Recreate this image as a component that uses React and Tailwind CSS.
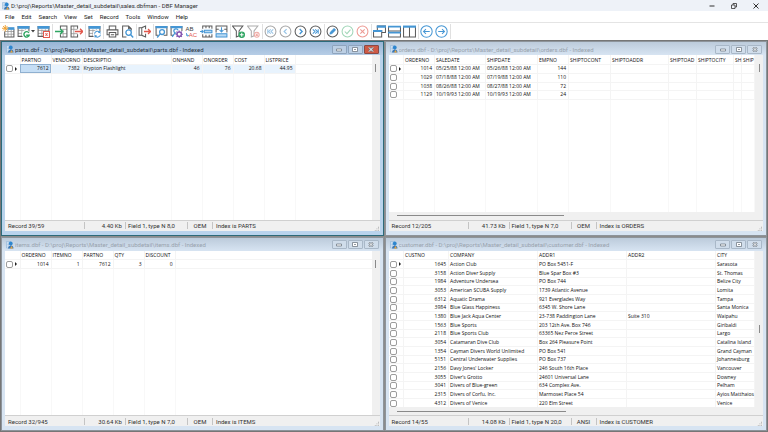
import { clsx } from 'clsx';

const partsColumns = [
  { name: 'PARTNO', width: 31, number: true },
  { name: 'VENDORNO', width: 31, number: true },
  { name: 'DESCRIPTIO', width: 89 },
  { name: 'ONHAND', width: 31, number: true },
  { name: 'ONORDER', width: 31, number: true },
  { name: 'COST', width: 31, number: true },
  { name: 'LISTPRICE', width: 31, number: true },
];

const partsRows = [['7612', '7382', 'Krypton Flashlight', '46', '76', '20.68', '44.95']];

const ordersColumns = [
  { name: 'ORDERNO', width: 31, number: true },
  { name: 'SALEDATE', width: 51 },
  { name: 'SHIPDATE', width: 52 },
  { name: 'EMPNO', width: 31, number: true },
  { name: 'SHIPTOCONT', width: 42 },
  { name: 'SHIPTOADDR', width: 58 },
  { name: 'SHIPTOAD', width: 28 },
  { name: 'SHIPTOCITY', width: 37 },
  { name: 'SH', width: 8 },
  { name: 'SHIP' },
];

const ordersRows = [
  ['1014', '05/25/88 12:00 AM', '05/26/88 12:00 AM', '144'],
  ['1029', '07/18/88 12:00 AM', '07/19/88 12:00 AM', '110'],
  ['1038', '08/26/88 12:00 AM', '08/27/88 12:00 AM', '72'],
  ['1129', '10/19/93 12:00 AM', '10/19/93 12:00 AM', '24'],
];

const itemsColumns = [
  { name: 'ORDERNO', width: 31, number: true },
  { name: 'ITEMNO', width: 31, number: true },
  { name: 'PARTNO', width: 31, number: true },
  { name: 'QTY', width: 31, number: true },
  { name: 'DISCOUNT', width: 31, number: true },
];

const itemsRows = [['1014', '1', '7612', '3', '0']];

const customerColumns = [
  { name: 'CUSTNO', width: 45, number: true },
  { name: 'COMPANY', width: 89 },
  { name: 'ADDR1', width: 89 },
  { name: 'ADDR2', width: 89 },
  { name: 'CITY' },
];

const customerRows = [
  ['1645', 'Action Club', 'PO Box 5451-F', '', 'Sarasota'],
  ['3158', 'Action Diver Supply', 'Blue Spar Box #3', '', 'St. Thomas'],
  ['1984', 'Adventure Undersea', 'PO Box 744', '', 'Belize City'],
  ['3053', 'American SCUBA Supply', '1739 Atlantic Avenue', '', 'Lomita'],
  ['6312', 'Aquatic Drama', '921 Everglades Way', '', 'Tampa'],
  ['3984', 'Blue Glass Happiness', '6345 W. Shore Lane', '', 'Santa Monica'],
  ['1380', 'Blue Jack Aqua Center', '23-738 Paddington Lane', 'Suite 310', 'Waipahu'],
  ['1563', 'Blue Sports', '203 12th Ave. Box 746', '', 'Giribaldi'],
  ['2118', 'Blue Sports Club', '63365 Nez Perce Street', '', 'Largo'],
  ['3054', 'Catamaran Dive Club', 'Box 264 Pleasure Point', '', 'Catalina Island'],
  ['1354', 'Cayman Divers World Unlimited', 'PO Box 541', '', 'Grand Cayman'],
  ['5151', 'Central Underwater Supplies', 'PO Box 737', '', 'Johannesburg'],
  ['2156', "Davy Jones' Locker", '246 South 16th Place', '', 'Vancouver'],
  ['3055', "Diver's Grotto", '24601 Universal Lane', '', 'Downey'],
  ['3041', 'Divers of Blue-green', '634 Complex Ave.', '', 'Pelham'],
  ['2315', 'Divers of Corfu, Inc.', 'Marmoset Place 54', '', 'Ayios Matthaios'],
  ['4312', 'Divers of Venice', '220 Elm Street', '', 'Venice'],
];

const BLUE = '#4596d4';
const DARK = '#5c5c5c';
const RED = '#e2574c';
const GREEN = '#2fa562';

function Svg({ children }) {
  return (
    <svg viewBox="0 0 24 24" fill="none" stroke={DARK} strokeWidth="1.9" className="size-[13px]">
      {children}
    </svg>
  );
}

function Grid() {
  return (
    <>
      <path d="M2 10h20M2 15.500h20M9 8v13M15.500 8v13" stroke="#9a9a9a" strokeWidth="1.500" />
      <path d="M2 3h20v18H2z" />
      <path d="M2 3h20v3H2z" fill={BLUE} stroke={BLUE} />
    </>
  );
}

const icons = {
  newTable: (
    <Svg>
      <path d="M5 12h17M5 17h17M11 8v14M17 8v14" stroke="#9a9a9a" strokeWidth="1.500" />
      <path d="M5 12v10h17V8" />
      <path d="M11 5h11v3H11z" fill={BLUE} stroke={BLUE} />
      <path d="M6 0v12M0 6h12M2 2l8 8M10 2l-8 8" stroke="#f0a030" strokeWidth="1.800" />
    </Svg>
  ),
  openTable: (
    <Svg>
      <Grid />
      <circle cx="17" cy="17" r="7" fill="#fff" stroke="#fff" />
      <path d="M22 14.500a5 5 0 1 0 .5 4.500H17" stroke={GREEN} strokeWidth="2.500" />
    </Svg>
  ),
  closeTable: (
    <Svg>
      <Grid />
      <path d="M12 12h11v11H12z" fill="#fff" stroke={RED} />
      <path d="M15.500 15.500l4 4M19.500 15.500l-4 4" stroke={RED} />
    </Svg>
  ),
  importData: (
    <Svg>
      <path d="M15 8v14M10 8h12M10 16h12" stroke="#9a9a9a" strokeWidth="1.500" />
      <path d="M10 7V2h12v20H10v-5" />
      <path d="M0 12h14M9.500 7l5 5-5 5" stroke={GREEN} strokeWidth="2.400" />
    </Svg>
  ),
  exportData: (
    <Svg>
      <path d="M7 2v20M2 8h12M2 16h12" stroke="#9a9a9a" strokeWidth="1.500" />
      <path d="M14 7V2H2v20h12v-5" />
      <path d="M9 12h14M18.500 7l5 5-5 5" stroke={RED} strokeWidth="2.400" />
    </Svg>
  ),
  refreshTable: (
    <Svg>
      <Grid />
      <circle cx="17" cy="17" r="7" fill="#fff" stroke="#fff" />
      <path d="M12 16a5.500 5.500 0 0 1 10-2v-3M22 14h-3M23 18a5.500 5.500 0 0 1-10 2v3M13 20h3" stroke={BLUE} />
    </Svg>
  ),
  print: (
    <Svg>
      <path d="M6 9V2h12v7M6 18H2V9h20v9h-4M6 14h12v8H6zM9 18h6" />
    </Svg>
  ),
  preview: (
    <Svg>
      <path d="M10 22H3V2h11l5 5v3M14 2v5h5" />
      <circle cx="14" cy="14" r="5" stroke={BLUE} strokeWidth="2.400" />
      <path d="M18 18l4.500 5" stroke={BLUE} strokeWidth="2.600" />
    </Svg>
  ),
  exit: (
    <Svg>
      <path d="M6 5H2v14h4M14 8V2L7 5v14l7 3v-6" />
      <path d="M11 12h12M18.500 7.500L23 12l-4.500 4.500" stroke={RED} strokeWidth="2.400" />
    </Svg>
  ),
  find: (
    <Svg>
      <path d="M6 19H2V3h20v16h-6" />
      <path d="M2 3h20v2H2z" fill={BLUE} stroke={BLUE} />
      <circle cx="13" cy="13" r="4.500" stroke={BLUE} strokeWidth="2.400" />
      <path d="M10 16l-6 7" stroke={BLUE} strokeWidth="2.600" />
    </Svg>
  ),
  findSettings: (
    <Svg>
      <path d="M6 19H2V3h20v8" />
      <path d="M2 3h20v2H2z" fill={BLUE} stroke={BLUE} />
      <path d="M12 15a4 4 0 1 1 3-5M9 15l-5 7" stroke={BLUE} strokeWidth="2.200" />
      <circle cx="17" cy="17" r="4" stroke="#8555b0" strokeWidth="2.600" />
      <path d="M17 10v3M17 21v3M10 17h3M21 17h3M12 12l2 2M20 20l2 2M22 12l-2 2M12 22l2-2" stroke="#8555b0" />
    </Svg>
  ),
  insertRow: (
    <Svg>
      <path d="M5 7V2h17v5M5 17v5h17v-5M11 18v4M17 18v4M11 2v4M17 2v4" />
      <path d="M8 9.500h14v5H8z" fill="#b8daf3" stroke={BLUE} />
      <path d="M0 12h6M3 9l3 3-3 3" stroke={BLUE} />
    </Svg>
  ),
  appendRow: (
    <Svg>
      <path d="M2 14V2h20v12M2 8h5M17 8h5" />
      <path d="M2 16h20v6H2z" fill="#b8daf3" stroke={BLUE} />
      <path d="M12 4v8M8.500 9l3.500 4 3.500-4" stroke={BLUE} />
    </Svg>
  ),
  filter: (
    <Svg>
      <path d="M1 2h19l-7 9v9l-5 2V11z" />
      <circle cx="18" cy="18" r="5" fill={GREEN} stroke={GREEN} />
      <path d="M18 14.500v7M14.500 18h7" stroke="#fff" />
    </Svg>
  ),
  clearFilter: (
    <Svg>
      <g opacity=".5">
        <path d="M1 2h19l-7 9v9l-5 2V11z" />
        <circle cx="18" cy="18" r="4.500" fill="#fff" stroke={RED} />
        <path d="M16 16l4 4M20 16l-4 4" stroke={RED} />
      </g>
    </Svg>
  ),
  first: (
    <Svg>
      <g opacity=".55">
        <circle cx="12" cy="12" r="10" />
        <path d="M7 8v8M12.500 8l-4 4 4 4M17 8l-4 4 4 4" stroke={BLUE} />
      </g>
    </Svg>
  ),
  prior: (
    <Svg>
      <g opacity=".55">
        <circle cx="12" cy="12" r="10" />
        <path d="M14 7.500L9.500 12l4.500 4.500" stroke={BLUE} strokeWidth="2.200" />
      </g>
    </Svg>
  ),
  next: (
    <Svg>
      <circle cx="12" cy="12" r="10" />
      <path d="M10.500 7.500L15 12l-4.500 4.500" stroke={BLUE} strokeWidth="2.500" />
    </Svg>
  ),
  last: (
    <Svg>
      <circle cx="12" cy="12" r="10" />
      <path d="M17 8v8M7 8l4 4-4 4M11.500 8l4 4-4 4" stroke={BLUE} />
    </Svg>
  ),
  edit: (
    <Svg>
      <circle cx="12" cy="12" r="10" />
      <path d="M7 17l1-4 7-7 3 3-7 7z" fill={BLUE} stroke={BLUE} strokeWidth="1" />
    </Svg>
  ),
  post: (
    <Svg>
      <g opacity=".45">
        <circle cx="12" cy="12" r="10" stroke={GREEN} />
        <path d="M7 12l4 4 6.500-7.500" stroke={GREEN} />
      </g>
    </Svg>
  ),
  cancel: (
    <Svg>
      <g opacity=".6">
        <circle cx="12" cy="12" r="10" stroke={RED} />
        <path d="M8 8l8 8M16 8l-8 8" stroke={RED} />
      </g>
    </Svg>
  ),
  cascade: (
    <Svg>
      <path d="M8 9V2h15v12h-6M1 10h15v12H1z" />
      <path d="M7 3h17M0 11h17" stroke={BLUE} strokeWidth="4" />
    </Svg>
  ),
  tileRows: (
    <Svg>
      <path d="M1 2v20h22V2M1 11h22" />
      <path d="M0 3h24M0 14h24" stroke={BLUE} strokeWidth="3.500" />
    </Svg>
  ),
  tileColumns: (
    <Svg>
      <path d="M1 2v20h22V2M12 3v19" />
      <path d="M0 3h24" stroke={BLUE} strokeWidth="4" />
    </Svg>
  ),
  back: (
    <Svg>
      <circle cx="12" cy="12" r="10.500" stroke={BLUE} />
      <path d="M18 12H7M11 7.500L6.500 12l4.500 4.500" stroke={BLUE} />
    </Svg>
  ),
  forward: (
    <Svg>
      <circle cx="12" cy="12" r="10.500" stroke={BLUE} />
      <path d="M6 12h11M13 7.500l4.500 4.500-4.500 4.500" stroke={BLUE} />
    </Svg>
  ),
};

function AppIcon() {
  return (
    <svg viewBox="0 0 16 16" className="size-2 shrink-0">
      <path d="M1 1h8v13H1z" fill="#dbe8f5" stroke="#7fa8d0" strokeWidth="1" />
      <path d="M3 4h4M3 7h4M3 10h4" stroke="#5b93c9" strokeWidth="1" />
      <circle cx="9.500" cy="5" r="3.800" fill="#2d86cf" />
      <path d="M4 15c0-4 3-6 6-6s5 2 5 6z" fill="#3c78b4" />
      <path d="M8 15l3-5 3 5z" fill="#f0a63a" />
    </svg>
  );
}

function ToolButton({ label, icon }) {
  return (
    <button type="button" aria-label={label} className="flex h-4 w-[15px] items-center justify-center">
      {icons[icon]}
    </button>
  );
}

function Separator({ wide }) {
  return <span className={clsx('h-[15px] w-px bg-[#e0e0e0]', wide ? 'mx-px' : 'ml-px')} />;
}

function Toolbar() {
  return (
    <div className="flex h-[17px] shrink-0 items-center bg-white pl-px">
      <ToolButton label="New table" icon="newTable" />
      <ToolButton label="Open table" icon="openTable" />
      <button type="button" aria-label="Recent tables" className="flex h-4 w-[5px] items-center">
        <svg viewBox="0 0 8 5" className="w-1">
          <path d="M0 0h8L4 5z" fill="#404040" />
        </svg>
      </button>
      <ToolButton label="Close table" icon="closeTable" />
      <Separator wide />
      <ToolButton label="Import" icon="importData" />
      <ToolButton label="Export" icon="exportData" />
      <Separator wide />
      <ToolButton label="Refresh" icon="refreshTable" />
      <Separator wide />
      <ToolButton label="Print" icon="print" />
      <ToolButton label="Preview" icon="preview" />
      <Separator />
      <ToolButton label="Exit" icon="exit" />
      <Separator />
      <ToolButton label="Find" icon="find" />
      <ToolButton label="Find settings" icon="findSettings" />
      <button
        type="button"
        aria-label="Replace"
        className="flex h-4 w-[15px] flex-col items-center justify-center font-['Liberation_Sans',sans-serif] text-[6px]/[6px] text-[#404040]"
      >
        <span className="pr-1">AB</span>
        <span className="flex items-center">
          <svg viewBox="0 0 6 8" className="w-[3px]" fill="none" stroke={BLUE} strokeWidth="1.600">
            <path d="M1 0v5h4M3 3l2 2-2 2" />
          </svg>
          <span className="text-[#e2574c]">AC</span>
        </span>
      </button>
      <ToolButton label="Insert record" icon="insertRow" />
      <ToolButton label="Append record" icon="appendRow" />
      <Separator />
      <ToolButton label="Filter" icon="filter" />
      <ToolButton label="Clear filter" icon="clearFilter" />
      <Separator />
      <ToolButton label="First" icon="first" />
      <ToolButton label="Prior" icon="prior" />
      <ToolButton label="Next" icon="next" />
      <ToolButton label="Last" icon="last" />
      <Separator />
      <ToolButton label="Edit" icon="edit" />
      <ToolButton label="Post" icon="post" />
      <ToolButton label="Cancel" icon="cancel" />
      <Separator />
      <ToolButton label="Cascade" icon="cascade" />
      <ToolButton label="Tile horizontally" icon="tileRows" />
      <ToolButton label="Tile vertically" icon="tileColumns" />
      <Separator />
      <ToolButton label="Back" icon="back" />
      <ToolButton label="Forward" icon="forward" />
      <Separator />
    </div>
  );
}

function WindowButtons({ active }) {
  const base = 'flex h-[9px] w-[15px] items-center justify-center rounded-[1px] border';
  const normal = active ? 'border-[#8ea4bd] bg-[#bccfe4]' : 'border-[#a9b8c8] bg-[#d0ddeb]';
  return (
    <div className="flex gap-px">
      <button type="button" aria-label="Minimize" className={clsx(base, normal)}>
        <svg viewBox="0 0 12 10" className="h-[5px] w-1.5">
          <path d="M1 4h10v4H1z" fill="#fff" stroke="#6c7680" strokeWidth="1.500" />
        </svg>
      </button>
      <button type="button" aria-label="Maximize" className={clsx(base, normal)}>
        <svg viewBox="0 0 12 10" className="h-[5px] w-1.5">
          <path d="M1 1h10v8H1z" fill="#fff" stroke="#6c7680" strokeWidth="1.500" />
          <path d="M4.500 4h3v2h-3z" fill="#6c7680" />
        </svg>
      </button>
      <button
        type="button"
        aria-label="Close"
        className={clsx(base, active ? 'border-[#8a4a45] bg-[#cf5a45]' : normal)}
      >
        <svg viewBox="0 0 12 10" className="h-[5px] w-1.5">
          <path d="M2 1l8 8M10 1L2 9" stroke="#6c7680" strokeWidth="4" />
          <path d="M2 1l8 8M10 1L2 9" stroke="#fff" strokeWidth="2" />
        </svg>
      </button>
    </div>
  );
}

function DataGrid({ columns, rows, selectFirst, filler }) {
  return (
    <table className="h-full w-full table-fixed border-collapse text-[5px]/[7px] text-[#101010]">
      <colgroup>
        <col className="w-[15px]" />
        {columns.map((col) => (
          <col key={col.name} style={col.width ? { width: col.width } : undefined} />
        ))}
        {filler && <col />}
      </colgroup>
      <thead>
        <tr className="h-[9px]">
          <td className="border-r border-[#f4f4f4] p-0" />
          {columns.map((col) => (
            <th
              key={col.name}
              className="border-r border-[#f4f4f4] p-0 pl-px text-left align-bottom font-normal whitespace-nowrap"
            >
              {col.name}
            </th>
          ))}
          {filler && <td />}
        </tr>
      </thead>
      <tbody>
        {rows.map((row, r) => (
          <tr
            key={row[0]}
            className={clsx('h-[9px] border-t border-[#f4f4f4] nth-[3n]:h-2', selectFirst && r === 0 && 'bg-[#e8f3fd]')}
          >
            <td className="border-r border-[#f4f4f4] bg-white p-0">
              <div className="flex items-center gap-[2px] pl-px">
                <input
                  type="checkbox"
                  aria-label={`Mark record ${row[0]}`}
                  className="size-[7px] appearance-none rounded-[2px] border border-[#9c9c9c] bg-white"
                />
                {r === 0 && (
                  <svg viewBox="0 0 4 8" className="h-1 w-[2px]">
                    <path d="M0 0l4 4-4 4z" fill="#202020" />
                  </svg>
                )}
              </div>
            </td>
            {columns.map((col, c) => (
              <td
                key={col.name}
                className={clsx(
                  'border-r border-[#f4f4f4] py-0 pr-[2px] pl-px whitespace-nowrap',
                  col.number && 'text-right',
                  selectFirst && r === 0 && c === 0 && 'bg-[#c5def5] outline -outline-offset-1 outline-[#8fb0d0]',
                )}
              >
                {row[c]}
              </td>
            ))}
            {filler && <td className="bg-white" />}
          </tr>
        ))}
        <tr className="border-t border-[#f4f4f4]">
          <td className="border-r border-[#f8f8f8] p-0" />
          {columns.map((col) => (
            <td key={col.name} className="border-r border-[#f8f8f8] p-0" />
          ))}
          {filler && <td />}
        </tr>
      </tbody>
    </table>
  );
}

function StatusBar({ record, size, field, charset, index }) {
  return (
    <div className="flex h-[11px] shrink-0 items-center border-t border-[#d0d0d0] bg-[#f0f0f0] pl-[3px] font-['Roboto',sans-serif] text-[6px]/[7px] whitespace-nowrap text-[#303030]">
      <span className="w-[76px]">{record}</span>
      <span className="w-[42px] border-x border-[#c4c4c4] pr-[3px] text-right">{size}</span>
      <span className="w-[62px] border-r border-[#c4c4c4] pl-[2px]">{field}</span>
      <span className="w-[25px] border-r border-[#c4c4c4] text-center">{charset}</span>
      <span className="flex-1 pl-[3px]">{index}</span>
      <svg viewBox="0 0 6 6" className="mr-px size-[5px] self-end">
        <path d="M5 1h1v1H5zM3 3h1v1H3zM5 3h1v1H5zM1 5h1v1H1zM3 5h1v1H3zM5 5h1v1H5z" fill="#a0a0a0" />
      </svg>
    </div>
  );
}

function ChildWindow({ title, active, columns, rows, status, filler, hScroll, thumbLow }) {
  return (
    <section
      className={clsx(
        'flex min-h-0 min-w-0 flex-col border px-[3px] pb-1',
        active ? 'border-[#2c6a7a] bg-[#b9d3ec]' : 'border-[#8d949b] bg-[#d7e4f2]',
      )}
    >
      <header
        className={clsx(
          '-mx-[3px] flex h-[13px] shrink-0 items-center gap-px bg-linear-to-b px-1 pt-px',
          active ? 'from-[#98b5d5] to-[#b6cde6]' : 'from-[#bccbdb] to-[#d7e4f2]',
        )}
      >
        <AppIcon />
        <h2
          className={clsx(
            "flex-1 truncate font-['Roboto',sans-serif] text-[6px]/[9px]",
            active ? 'text-[#26303c]' : 'text-[#98a2ad]',
          )}
        >
          {title}
        </h2>
        <WindowButtons active={active} />
      </header>
      <div className="flex min-h-0 flex-1 flex-col bg-white">
        <div className="flex min-h-0 flex-1">
          <div className="min-w-0 flex-1 overflow-hidden">
            <DataGrid columns={columns} rows={rows} selectFirst={active} filler={filler} />
          </div>
          <div className={clsx('flex w-2 justify-center bg-[#f0f0f0]', thumbLow ? 'items-center' : 'pt-[9px]')}>
            <span className="h-2 w-px bg-[#8a8a8a]" />
          </div>
        </div>
        {hScroll && (
          <div className="flex h-2 shrink-0 items-center bg-[#f0f0f0] px-2">
            <span className={clsx('h-px bg-[#8a8a8a]', hScroll)} />
          </div>
        )}
        <StatusBar {...status} />
      </div>
    </section>
  );
}

export default function App() {
  return (
    <div className="flex h-screen flex-col overflow-hidden bg-[#8c8c8c] font-['Open_Sans',sans-serif]">
      <header className="flex h-[11px] shrink-0 items-center bg-[#eef2f8] pl-[2px] font-['Roboto',sans-serif] text-[6px]/[9px] text-[#303030]">
        <AppIcon />
        <h1 className="flex-1 pl-px">D:\proj\Reports\Master_detail_subdetail\sales.dbfman - DBF Manager</h1>
        <div className="flex gap-4 pr-[9px]">
          <button type="button" aria-label="Minimize">
            <svg viewBox="0 0 12 12" className="size-[6px]" fill="none" stroke="#303030" strokeWidth="2">
              <path d="M1 6h10" />
            </svg>
          </button>
          <button type="button" aria-label="Restore">
            <svg viewBox="0 0 12 12" className="size-[6px]" fill="none" stroke="#303030" strokeWidth="1.600">
              <path d="M1 4h7v7H1zM4 4V1h7v7H8" />
            </svg>
          </button>
          <button type="button" aria-label="Close">
            <svg viewBox="0 0 12 12" className="size-[6px]" fill="none" stroke="#303030" strokeWidth="2">
              <path d="M1 1l10 10M11 1L1 11" />
            </svg>
          </button>
        </div>
      </header>

      <nav className="flex h-3 shrink-0 items-center gap-[7px] border-b border-[#e4e4e4] bg-white pl-[5px] font-['Roboto',sans-serif] text-[6px]/[9px] text-[#202020]">
        <button type="button">File</button>
        <button type="button">Edit</button>
        <button type="button">Search</button>
        <button type="button">View</button>
        <button type="button">Set</button>
        <button type="button">Record</button>
        <button type="button">Tools</button>
        <button type="button">Window</button>
        <button type="button">Help</button>
      </nav>

      <Toolbar />

      <main className="grid min-h-0 flex-1 grid-cols-2 grid-rows-2 gap-px border border-[#767676]">
        <ChildWindow
          active
          filler
          title="parts.dbf - D:\proj\Reports\Master_detail_subdetail\parts.dbf - Indexed"
          columns={partsColumns}
          rows={partsRows}
          status={{ record: 'Record 39/59', size: '4.40 Kb', field: 'Field 1, type N 8,0', charset: 'OEM', index: 'Index is PARTS' }}
        />
        <ChildWindow
          title="orders.dbf - D:\proj\Reports\Master_detail_subdetail\orders.dbf - Indexed"
          columns={ordersColumns}
          rows={ordersRows}
          hScroll="w-[167px]"
          status={{ record: 'Record 12/205', size: '41.73 Kb', field: 'Field 1, type N 7,0', charset: 'OEM', index: 'Index is ORDERS' }}
        />
        <ChildWindow
          filler
          title="items.dbf - D:\proj\Reports\Master_detail_subdetail\items.dbf - Indexed"
          columns={itemsColumns}
          rows={itemsRows}
          status={{ record: 'Record 32/945', size: '30.64 Kb', field: 'Field 1, type N 7,0', charset: 'OEM', index: 'Index is ITEMS' }}
        />
        <ChildWindow
          title="customer.dbf - D:\proj\Reports\Master_detail_subdetail\customer.dbf - Indexed"
          columns={customerColumns}
          rows={customerRows}
          hScroll="w-[169px]"
          thumbLow
          status={{ record: 'Record 14/55', size: '14.08 Kb', field: 'Field 1, type N 20,0', charset: 'ANSI', index: 'Index is CUSTOMER' }}
        />
      </main>
    </div>
  );
}
